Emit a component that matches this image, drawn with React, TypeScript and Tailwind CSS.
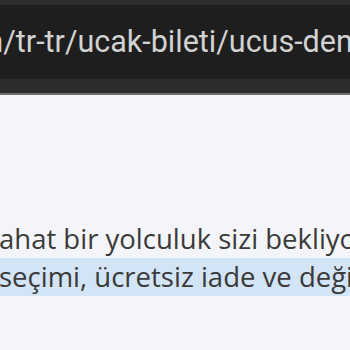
import React from 'react'

export default function App() {
  return (
    <div className="w-[350px] h-[350px] overflow-hidden bg-[#f4f5f9]">
      {/* browser address bar */}
      <div className="bg-[#2d2d2d] pt-[5px]">
        <div className="h-[74px] bg-[#1e1e1e] flex items-center overflow-hidden">
          <span
            className="whitespace-nowrap text-[30.5px] text-[#d2d2d2] ml-[-23.5px]"
            style={{ fontFamily: 'Roboto, "Liberation Sans", sans-serif' }}
          >
            m/tr-tr/ucak-bileti/ucus-deneyimi
          </span>
        </div>
        <div className="h-[14px] bg-[#2c2c2c]" />
        <div className="h-[2px] bg-[#6e6e6e]" />
      </div>

      {/* page text */}
      <div
        className="pt-[125px] text-[27.5px] leading-[38px] text-[#3a3a3a] whitespace-nowrap overflow-hidden"
        style={{ fontFamily: '"Open Sans", "Noto Sans", sans-serif' }}
      >
        <div className="ml-[-1px]">ahat bir yolculuk sizi bekliyor.</div>
        <div className="bg-[#d2e4f6]">
          <span className="ml-[-1px]">seçimi, ücretsiz iade ve değişiklik</span>
        </div>
      </div>
    </div>
  )
}
